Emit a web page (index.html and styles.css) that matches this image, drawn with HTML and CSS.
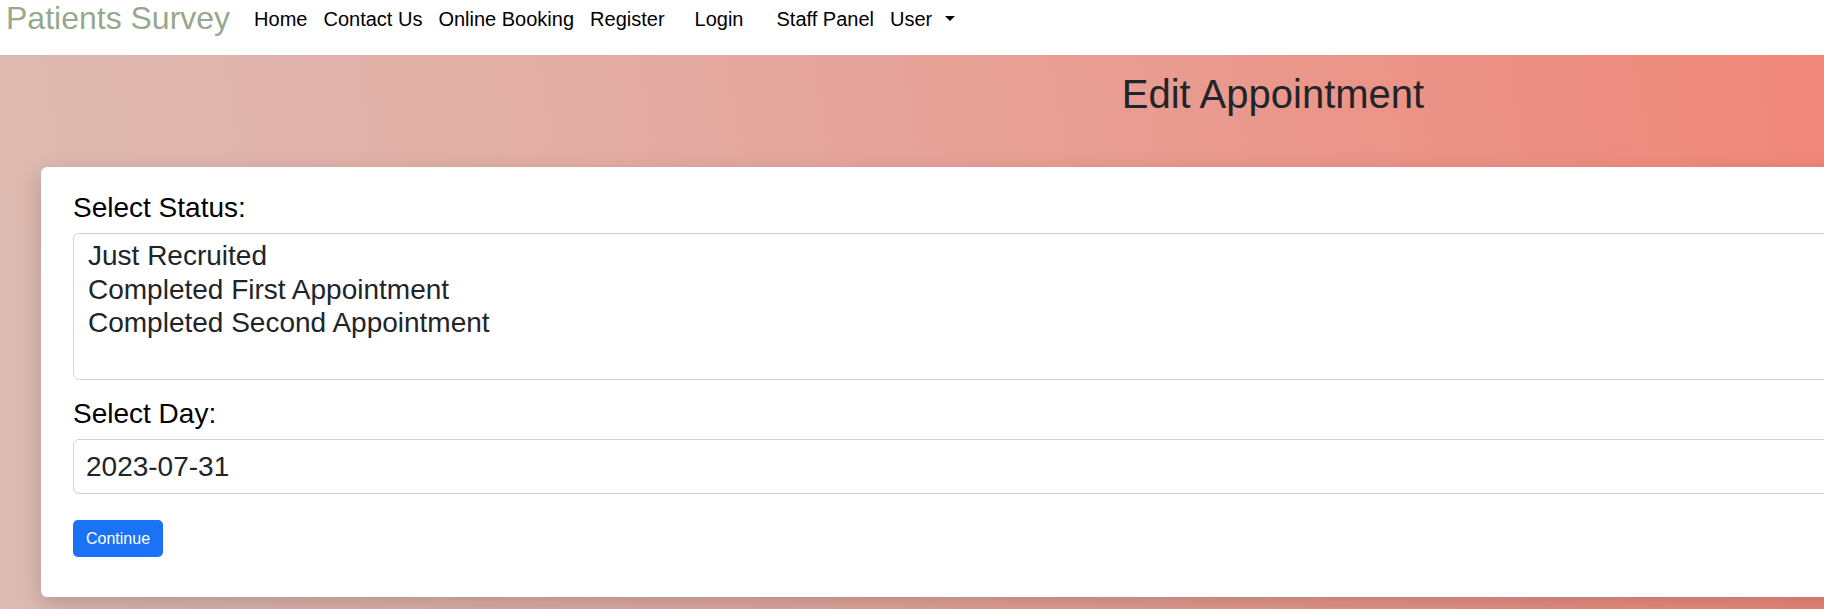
FILE: index.html
```html
<!DOCTYPE html>
<html lang="en">
<head>
<meta charset="utf-8">
<title>Edit Appointment</title>
<link rel="stylesheet" href="styles.css">
</head>
<body>
<div class="page">
  <nav class="navbar">
    <a class="brand" href="#">Patients Survey</a>
    <ul class="nav-list">
      <li><a class="nav-link" href="#">Home</a></li>
      <li><a class="nav-link" href="#">Contact Us</a></li>
      <li><a class="nav-link" href="#">Online Booking</a></li>
      <li><a class="nav-link" href="#">Register</a></li>
      <li class="nav-item-spaced"><a class="nav-link" href="#">Login</a></li>
      <li><a class="nav-link" href="#">Staff Panel</a></li>
      <li><a class="nav-link dropdown-toggle" href="#">User</a></li>
    </ul>
  </nav>
  <main class="content">
    <h1 class="title">Edit Appointment</h1>
    <form class="card">
      <label class="field-label">Select Status:</label>
      <div class="listbox" role="listbox">
        <div class="option" role="option">Just Recruited</div>
        <div class="option" role="option">Completed First Appointment</div>
        <div class="option" role="option">Completed Second Appointment</div>
      </div>
      <label class="field-label">Select Day:</label>
      <input class="date-input" type="text" value="2023-07-31">
      <button class="btn-primary" type="button">Continue</button>
    </form>
  </main>
</div>
</body>
</html>
```
FILE: styles.css
```css
html, body {
  margin: 0;
  padding: 0;
  overflow: hidden;
}

body {
  font-family: "Liberation Sans", Arial, sans-serif;
  color: #212529;
  background: #ffffff;
}

.page {
  width: 2546px;
}

.navbar {
  height: 55px;
  box-sizing: border-box;
  background: #ffffff;
  display: flex;
  align-items: flex-start;
  padding-left: 6px;
}

.brand {
  font-size: 32px;
  line-height: 36px;
  color: #97a98c;
  text-decoration: none;
  margin-right: 16px;
}

.nav-list {
  display: flex;
  list-style: none;
  margin: 0;
  padding: 4px 0 0 0;
}

.nav-link {
  display: block;
  font-size: 20px;
  line-height: 30px;
  color: #000000;
  text-decoration: none;
  padding: 0 8px;
}

.nav-item-spaced {
  margin: 0 17px 0 14px;
}

.dropdown-toggle::after {
  content: "";
  display: inline-block;
  margin-left: 13px;
  vertical-align: 5px;
  border-top: 5px solid #000;
  border-left: 5px solid transparent;
  border-right: 5px solid transparent;
}

.content {
  background-color: #ef877a;
  background-image: linear-gradient(80deg, #dcbbb2 0%, #e3ada4 35%, #e99b90 65%, #f0877a 100%);
  background-size: 1824px 100%;
  background-repeat: no-repeat;
  padding: 15px 41px 12px;
}

.title {
  font-size: 40px;
  line-height: 48px;
  font-weight: 400;
  text-align: center;
  margin: 0 0 49px;
  color: #212529;
}

.card {
  display: block;
  background: #ffffff;
  border-radius: 6px;
  box-shadow: 0 8px 24px rgba(0, 0, 0, 0.18);
  padding: 20px 32px 40px;
}

.field-label {
  display: block;
  font-size: 28px;
  line-height: 42px;
  margin-bottom: 4px;
  color: #000000;
}

.listbox {
  height: 147px;
  box-sizing: border-box;
  border: 1px solid #ced4da;
  border-radius: 6px;
  padding: 5px 14px;
  font-size: 28px;
  line-height: 33.5px;
  color: #212529;
  margin-bottom: 13px;
}

.date-input {
  display: block;
  width: 100%;
  height: 55px;
  box-sizing: border-box;
  border: 1px solid #ced4da;
  border-radius: 6px;
  padding: 0 12px;
  font-family: inherit;
  font-size: 28px;
  color: #212529;
  background: #ffffff;
  margin: 0 0 26px;
  outline: none;
}

.btn-primary {
  height: 37px;
  padding: 0 13px;
  font-family: inherit;
  font-size: 16px;
  color: #ffffff;
  background: #1a73f7;
  border: none;
  border-radius: 5px;
}
```
